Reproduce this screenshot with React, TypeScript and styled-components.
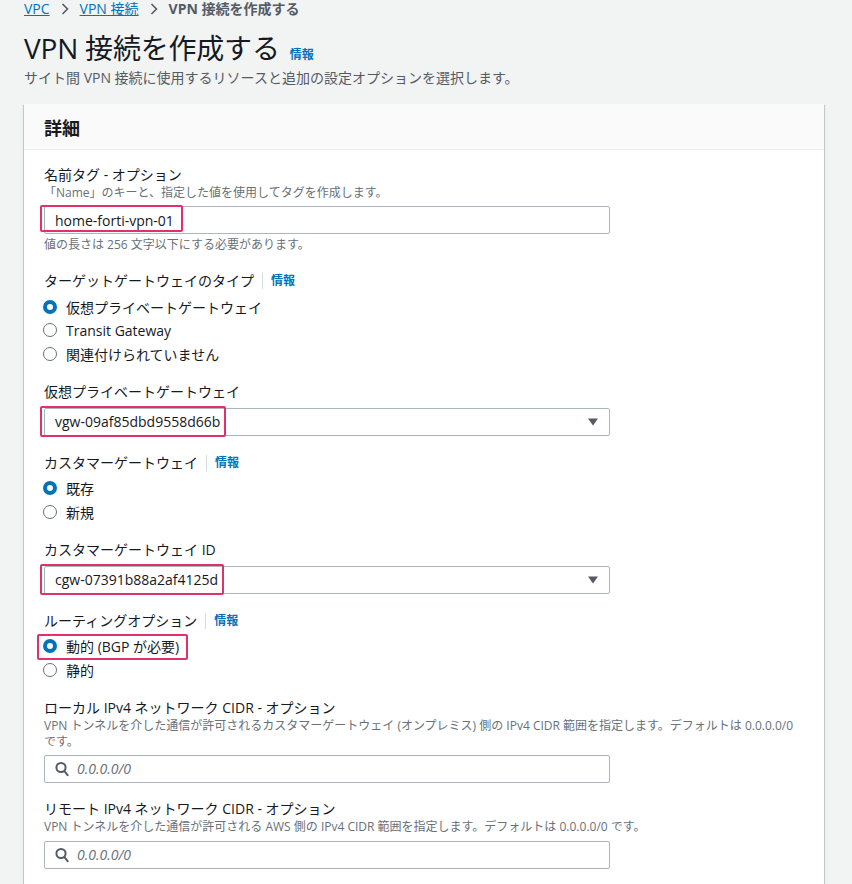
import React from "react";
import styled, { createGlobalStyle } from "styled-components";

const GlobalStyle = createGlobalStyle`
  body {
    margin: 0;
    background: #f2f3f3;
    font-family: "Open Sans", "Noto Sans CJK JP", sans-serif;
    color: #16191f;
  }
`;

const Page = styled.div`
  padding: 0 28px 0 24px;
  min-height: 884px;
`;

const Breadcrumbs = styled.nav`
  display: flex;
  align-items: center;
  gap: 10px;
  height: 17px;
  font-size: 14px;
  line-height: 17px;
`;

const Crumb = styled.a`
  color: #0073bb;
  text-decoration: underline;
`;

const CurrentCrumb = styled.span`
  color: #545b64;
  font-weight: 700;
`;

const Chevron = () => (
  <svg width="10" height="14" viewBox="0 0 10 14">
    <path d="M2.5 2 L7.5 7 L2.5 12" fill="none" stroke="#545b64" strokeWidth="1.6" />
  </svg>
);

const TitleRow = styled.div`
  display: flex;
  align-items: baseline;
  gap: 10px;
  margin-top: 13px;
`;

const Title = styled.h1`
  margin: 0;
  font-size: 28px;
  line-height: 36px;
  font-weight: 400;
  letter-spacing: -0.2px;
`;

const Info = styled.a`
  color: #0073bb;
  font-size: 12px;
  font-weight: 700;
  line-height: 16px;
`;

const Subtitle = styled.p`
  margin: 3px 0 0;
  font-size: 14px;
  line-height: 18px;
  color: #545b64;
`;

const Panel = styled.section`
  margin-top: 17px;
  width: 800px;
  background: #fff;
  box-shadow: 0 1px 1px 0 rgba(0, 28, 36, 0.3), 1px 1px 1px 0 rgba(0, 28, 36, 0.15),
    -1px 1px 1px 0 rgba(0, 28, 36, 0.15);
`;

const PanelHeader = styled.header`
  height: 45px;
  display: flex;
  align-items: center;
  padding: 0 20px;
  background: #fafafa;
  border-bottom: 1px solid #eaeded;
  font-size: 18px;
  font-weight: 700;
`;

const PanelBody = styled.div`
  padding: 15px 20px 40px;
  display: flex;
  flex-direction: column;
`;

const Field = styled.div<{ $gap?: number }>`
  display: flex;
  flex-direction: column;
  margin-top: ${(p) => p.$gap ?? 0}px;
`;

const LabelRow = styled.div`
  display: flex;
  align-items: center;
  font-size: 14px;
  line-height: 20px;
`;

const Divider = styled.span`
  width: 1px;
  height: 16px;
  background: #d5dbdb;
  margin: 0 8px;
`;

const Description = styled.div`
  font-size: 12px;
  line-height: 16px;
  color: #687078;
`;

const Hint = styled(Description)`
  margin-top: 3px;
`;

const Control = styled.div<{ $top?: number }>`
  position: relative;
  box-sizing: border-box;
  width: 566px;
  height: 28px;
  margin-top: ${(p) => p.$top ?? 5}px;
  display: flex;
  align-items: center;
  padding: 0 10px;
  gap: 8px;
  border: 1px solid #aab7b8;
  border-radius: 2px;
  background: #fff;
  font-size: 14px;
`;

const Value = styled.span`
  flex: 1;
`;

const Placeholder = styled.span`
  flex: 1;
  font-style: italic;
  color: #687078;
`;

const Marker = styled.span<{ $w: number; $left?: number; $h?: number; $top?: number }>`
  position: absolute;
  left: ${(p) => p.$left ?? -5}px;
  top: ${(p) => p.$top ?? -2}px;
  width: ${(p) => p.$w}px;
  height: ${(p) => p.$h ?? 27}px;
  box-sizing: border-box;
  border: 2px solid #e0306e;
  border-radius: 2px;
  pointer-events: none;
`;

const RadioGroup = styled.div`
  display: flex;
  flex-direction: column;
  margin-top: 4px;
`;

const RadioRow = styled.label`
  position: relative;
  display: flex;
  align-items: center;
  gap: 9px;
  height: 23.5px;
  font-size: 14px;
`;

const RadioDot = styled.span<{ $on?: boolean }>`
  box-sizing: border-box;
  width: 14px;
  height: 14px;
  margin-left: -1px;
  border-radius: 50%;
  border: ${(p) => (p.$on ? "4px solid #0073bb" : "1px solid #687078")};
  background: #fff;
`;

const Caret = () => (
  <svg width="12" height="10" viewBox="0 0 12 10">
    <path d="M1 1.5 H11 L6 8.5 Z" fill="#545b64" />
  </svg>
);

const SearchIcon = () => (
  <svg width="14" height="16" viewBox="0 0 14 16">
    <circle cx="6" cy="6.5" r="4.6" fill="none" stroke="#545b64" strokeWidth="2" />
    <path d="M9.3 10 L12.6 14.2" stroke="#545b64" strokeWidth="2" strokeLinecap="round" />
  </svg>
);

type Option = { label: string; on?: boolean; mark?: number };

const Radios = ({ options }: { options: Option[] }) => (
  <RadioGroup>
    {options.map((o) => (
      <RadioRow key={o.label}>
        <RadioDot $on={o.on} />
        {o.label}
        {o.mark && <Marker $w={o.mark} $left={-7} $top={-1} $h={26} />}
      </RadioRow>
    ))}
  </RadioGroup>
);

const Label = ({ text, info }: { text: string; info?: boolean }) => (
  <LabelRow>
    {text}
    {info && (
      <>
        <Divider />
        <Info>情報</Info>
      </>
    )}
  </LabelRow>
);

export default function App() {
  return (
    <>
      <GlobalStyle />
      <Page>
        <Breadcrumbs>
          <Crumb>VPC</Crumb>
          <Chevron />
          <Crumb>VPN 接続</Crumb>
          <Chevron />
          <CurrentCrumb>VPN 接続を作成する</CurrentCrumb>
        </Breadcrumbs>
        <TitleRow>
          <Title>VPN 接続を作成する</Title>
          <Info>情報</Info>
        </TitleRow>
        <Subtitle>サイト間 VPN 接続に使用するリソースと追加の設定オプションを選択します。</Subtitle>

        <Panel>
          <PanelHeader>詳細</PanelHeader>
          <PanelBody>
            <Field>
              <Label text="名前タグ - オプション" />
              <Description>「Name」のキーと、指定した値を使用してタグを作成します。</Description>
              <Control>
                <Value>home-forti-vpn-01</Value>
                <Marker $w={143} />
              </Control>
              <Hint>値の長さは 256 文字以下にする必要があります。</Hint>
            </Field>

            <Field $gap={18}>
              <Label text="ターゲットゲートウェイのタイプ" info />
              <Radios
                options={[
                  { label: "仮想プライベートゲートウェイ", on: true },
                  { label: "Transit Gateway" },
                  { label: "関連付けられていません" },
                ]}
              />
            </Field>

            <Field $gap={16}>
              <Label text="仮想プライベートゲートウェイ" />
              <Control $top={6}>
                <Value>vgw-09af85dbd9558d66b</Value>
                <Caret />
                <Marker $w={186} $top={-3} $h={31} />
              </Control>
            </Field>

            <Field $gap={17}>
              <Label text="カスタマーゲートウェイ" info />
              <Radios options={[{ label: "既存", on: true }, { label: "新規" }]} />
            </Field>

            <Field $gap={16}>
              <Label text="カスタマーゲートウェイ ID" />
              <Control $top={6}>
                <Value>cgw-07391b88a2af4125d</Value>
                <Caret />
                <Marker $w={184} $top={-3} $h={31} />
              </Control>
            </Field>

            <Field $gap={17}>
              <Label text="ルーティングオプション" info />
              <Radios options={[{ label: "動的 (BGP が必要)", on: true, mark: 151 }, { label: "静的" }]} />
            </Field>

            <Field $gap={16}>
              <Label text="ローカル IPv4 ネットワーク CIDR - オプション" />
              <Description>
                VPN トンネルを介した通信が許可されるカスタマーゲートウェイ (オンプレミス) 側の IPv4 CIDR 範囲を指定します。デフォルトは 0.0.0.0/0 です。
              </Description>
              <Control>
                <SearchIcon />
                <Placeholder>0.0.0.0/0</Placeholder>
              </Control>
            </Field>

            <Field $gap={16}>
              <Label text="リモート IPv4 ネットワーク CIDR - オプション" />
              <Description>
                VPN トンネルを介した通信が許可される AWS 側の IPv4 CIDR 範囲を指定します。デフォルトは 0.0.0.0/0 です。
              </Description>
              <Control $top={6}>
                <SearchIcon />
                <Placeholder>0.0.0.0/0</Placeholder>
              </Control>
            </Field>
          </PanelBody>
        </Panel>
      </Page>
    </>
  );
}
